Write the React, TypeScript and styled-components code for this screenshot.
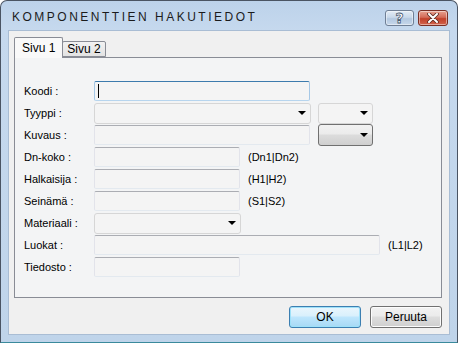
import styled, { createGlobalStyle } from 'styled-components';

const GlobalStyle = createGlobalStyle`
  html, body {
    margin: 0;
    padding: 0;
    background: #ffffff;
  }
  * {
    box-sizing: border-box;
  }
`;

const Window = styled.div`
  width: 458px;
  height: 343px;
  display: flex;
  flex-direction: column;
  border: 1px solid #4a5463;
  border-bottom-color: #3a8a9c;
  border-radius: 7px 7px 0 0;
  background: linear-gradient(#bcd2ea, #c6d9ee 30px, #bfd4ea);
  font-family: "Liberation Sans", Arial, sans-serif;
  overflow: hidden;
`;

const TitleBar = styled.div`
  height: 29px;
  flex-shrink: 0;
  display: flex;
  align-items: center;
  justify-content: space-between;
  padding: 2px 9px 0 11px;
`;

const Title = styled.span`
  font-size: 12px;
  letter-spacing: 2.5px;
  color: #1b1b1b;
`;

const CaptionButtons = styled.div`
  display: flex;
  gap: 4px;
  margin-top: 2px;
`;

const CaptionButton = styled.div<{ $close?: boolean }>`
  width: ${(p) => (p.$close ? 30 : 29)}px;
  height: 16px;
  border-radius: 3px;
  display: flex;
  align-items: center;
  justify-content: center;
  border: 1px solid ${(p) => (p.$close ? '#7a2f25' : '#6f7f95')};
  background: ${(p) =>
    p.$close
      ? 'linear-gradient(#e8a190, #d46b58 45%, #c2402a 55%, #d2644d)'
      : 'linear-gradient(#e3ecf6, #c9d9ea 45%, #b3c8e0 55%, #c7d8eb)'};
  box-shadow: inset 0 0 0 1px rgba(255, 255, 255, 0.45);
  font-family: "DejaVu Sans", sans-serif;
  font-size: 14px;
  font-weight: bold;
  color: #ffffff;
  -webkit-text-stroke: 0.8px #4a5a70;
  line-height: 1;
`;

const Client = styled.div`
  flex: 1;
  margin: 0 7px 7px 7px;
  background: #f0f0f0;
  border: 1px solid #a9bdd4;
  display: flex;
  flex-direction: column;
  padding: 6px 7px 6px 5px;
`;

const TabStrip = styled.div`
  display: flex;
  align-items: flex-end;
  height: 21px;
  margin-bottom: -1px;
  position: relative;
  z-index: 1;
`;

const Tab = styled.div<{ $active?: boolean }>`
  height: ${(p) => (p.$active ? 21 : 16)}px;
  padding: 0 ${(p) => (p.$active ? 7 : 4)}px;
  margin-bottom: ${(p) => (p.$active ? 0 : 1)}px;
  margin-left: ${(p) => (p.$active ? 0 : -1)}px;
  display: flex;
  align-items: center;
  font-size: 12px;
  color: #000;
  border: 1px solid #898c95;
  border-bottom: ${(p) => (p.$active ? 'none' : '1px solid #898c95')};
  border-radius: 2px 2px 0 0;
  background: ${(p) => (p.$active ? '#f9f9f9' : 'linear-gradient(#f2f2f2, #e3e3e3)')};
`;

const TabPanel = styled.div`
  flex: 1;
  border: 1px solid #898c95;
  background: #f3f4f5;
  padding: 23px 9px 0 9px;
`;

const FormGrid = styled.div`
  display: grid;
  grid-template-columns: 70px 1fr;
  grid-auto-rows: 20px;
  row-gap: 2px;
  align-items: center;
`;

const Label = styled.span`
  font-size: 11px;
  color: #000;
`;

const Field = styled.div<{ $gap?: number }>`
  display: flex;
  align-items: center;
  gap: ${(p) => p.$gap ?? 8}px;
  height: 20px;
`;

const TextBox = styled.div<{ $w: number; $focused?: boolean }>`
  width: ${(p) => p.$w}px;
  height: 20px;
  background: #f4f4f4;
  border: 1px solid ${(p) => (p.$focused ? '#a6c8e6' : '#e2e3ea')};
  border-top-color: ${(p) => (p.$focused ? '#3d7bad' : '#abadb3')};
  border-bottom-color: ${(p) => (p.$focused ? '#b7d5ee' : '#e3e9ef')};
  border-radius: 2px;
  display: flex;
  align-items: center;
  padding-left: 3px;
`;

const Caret = styled.span`
  width: 1px;
  height: 14px;
  background: #000;
`;

const ComboBox = styled.div<{ $w: number; $raised?: boolean }>`
  width: ${(p) => p.$w}px;
  height: ${(p) => (p.$raised ? 22 : 21)}px;
  border: 1px solid ${(p) => (p.$raised ? '#707070' : '#d6d6d6')};
  border-radius: 3px;
  background: ${(p) =>
    p.$raised ? 'linear-gradient(#f2f2f2, #ebebeb 45%, #dcdcdc 50%, #cfcfcf)' : '#f4f4f4'};
  display: flex;
  align-items: center;
  justify-content: flex-end;
  padding-right: 4px;
`;

const Arrow = styled.span`
  width: 0;
  height: 0;
  border-left: 4px solid transparent;
  border-right: 4px solid transparent;
  border-top: 4px solid #000;
`;

const Hint = styled.span`
  font-size: 11px;
  color: #000;
`;

const ButtonRow = styled.div`
  display: flex;
  justify-content: flex-end;
  gap: 9px;
  margin-top: 8px;
`;

const PushButton = styled.div<{ $default?: boolean }>`
  width: 72px;
  height: 22px;
  display: flex;
  align-items: center;
  justify-content: center;
  font-size: 12px;
  color: #000;
  border-radius: 3px;
  border: 1px solid ${(p) => (p.$default ? '#3c7fb1' : '#707070')};
  background: ${(p) =>
    p.$default
      ? 'linear-gradient(#eaf6fd, #d9f0fc 45%, #bee6fd 50%, #a7d9f5)'
      : 'linear-gradient(#f2f2f2, #ebebeb 45%, #dddddd 50%, #cfcfcf)'};
  box-shadow: inset 0 0 0 1px ${(p) => (p.$default ? '#9ee1f9' : '#fcfcfc')};
`;

const CloseGlyph = () => (
  <svg width="12" height="10" viewBox="0 0 12 10">
    <path d="M2 1 L10 9 M10 1 L2 9" stroke="#5a2a22" strokeWidth="3.6" strokeLinecap="round" />
    <path d="M2 1 L10 9 M10 1 L2 9" stroke="#ffffff" strokeWidth="2" strokeLinecap="round" />
  </svg>
);

const App = () => {
  return (
    <>
      <GlobalStyle />
      <Window>
        <TitleBar>
          <Title>KOMPONENTTIEN HAKUTIEDOT</Title>
          <CaptionButtons>
            <CaptionButton>?</CaptionButton>
            <CaptionButton $close>
              <CloseGlyph />
            </CaptionButton>
          </CaptionButtons>
        </TitleBar>
        <Client>
          <TabStrip>
            <Tab $active>Sivu 1</Tab>
            <Tab>Sivu 2</Tab>
          </TabStrip>
          <TabPanel>
            <FormGrid>
              <Label>Koodi :</Label>
              <Field>
                <TextBox $w={216} $focused>
                  <Caret />
                </TextBox>
              </Field>

              <Label>Tyyppi :</Label>
              <Field $gap={7}>
                <ComboBox $w={217}>
                  <Arrow />
                </ComboBox>
                <ComboBox $w={55}>
                  <Arrow />
                </ComboBox>
              </Field>

              <Label>Kuvaus :</Label>
              <Field>
                <TextBox $w={216} />
                <ComboBox $w={55} $raised>
                  <Arrow />
                </ComboBox>
              </Field>

              <Label>Dn-koko :</Label>
              <Field>
                <TextBox $w={146} />
                <Hint>(Dn1|Dn2)</Hint>
              </Field>

              <Label>Halkaisija :</Label>
              <Field>
                <TextBox $w={146} />
                <Hint>(H1|H2)</Hint>
              </Field>

              <Label>Seinämä :</Label>
              <Field>
                <TextBox $w={146} />
                <Hint>(S1|S2)</Hint>
              </Field>

              <Label>Materiaali :</Label>
              <Field>
                <ComboBox $w={147}>
                  <Arrow />
                </ComboBox>
              </Field>

              <Label>Luokat :</Label>
              <Field>
                <TextBox $w={286} />
                <Hint>(L1|L2)</Hint>
              </Field>

              <Label>Tiedosto :</Label>
              <Field>
                <TextBox $w={146} />
              </Field>
            </FormGrid>
          </TabPanel>
          <ButtonRow>
            <PushButton $default>OK</PushButton>
            <PushButton>Peruuta</PushButton>
          </ButtonRow>
        </Client>
      </Window>
    </>
  );
};

export default App;
